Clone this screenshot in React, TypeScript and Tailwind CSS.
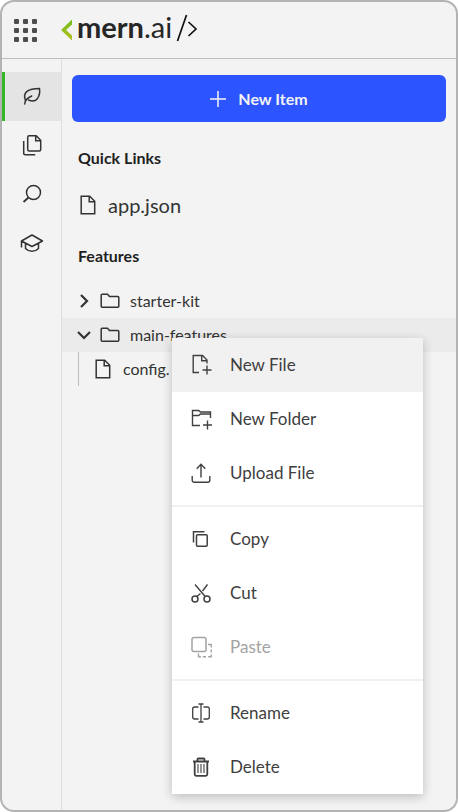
import { useState, type ReactNode } from "react";
import clsx from "clsx";

type IconProps = { className?: string; children: ReactNode };

function Icon({ className, children }: IconProps) {
  return (
    <svg
      viewBox="0 0 24 24"
      fill="none"
      stroke="currentColor"
      strokeWidth="1.5"
      className={clsx("h-6 w-6 shrink-0", className)}
      aria-hidden="true"
    >
      {children}
    </svg>
  );
}

const LeafIcon = () => (
  <Icon>
    <path d="M4.700 20c0-3 1.500-5.700 7-8M5.300 16C2.500 8 8 4.700 19.500 4.500C20.500 11 17.500 19.700 8.500 16" strokeLinecap="round" strokeLinejoin="round" />
  </Icon>
);

const FilesIcon = () => (
  <Icon>
    <path d="M9.200 2.700h7l4.500 4.500v9.300a1.500 1.500 0 0 1-1.500 1.500H9.200a1.500 1.500 0 0 1-1.500-1.500V4.200a1.500 1.500 0 0 1 1.500-1.500ZM15.700 3v4.700h4.700M3.700 8v12.200a1.500 1.500 0 0 0 1.500 1.500h10" />
  </Icon>
);

const SearchIcon = () => (
  <Icon>
    <circle cx="13.500" cy="10.500" r="7" />
    <path d="M8.500 15.500 3.500 20" strokeWidth="1.800" />
  </Icon>
);

const CapIcon = () => (
  <Icon>
    <path d="M12 4 1.500 10 12 15.500 22.500 10 12 4ZM1.500 10v6.500M5.500 12.500v5c3.500 3.700 9.500 3.700 13 0v-5" strokeLinejoin="round" />
  </Icon>
);

const FileIcon = () => (
  <Icon>
    <path d="M5.200 3.200h8.500l5 5v12.600H5.200V3.200ZM13.200 3.200v5.500h5.500" />
  </Icon>
);

const FolderIcon = () => (
  <Icon>
    <path d="M3.200 6.200a1 1 0 0 1 1-1h5.300l2 2.200h8.300a1 1 0 0 1 1 1v8.800a1 1 0 0 1-1 1H4.200a1 1 0 0 1-1-1Z" />
  </Icon>
);

const NewFileIcon = () => (
  <Icon>
    <path d="M10 19.500H4.200v-17h9.300l4.500 4.500v3.500M12.700 2.700v5H18M18 12.500v9M13.500 17h9" strokeWidth="1.400" />
  </Icon>
);

const NewFolderIcon = () => (
  <Icon>
    <path d="M11 18.500H3.500V3.500h6.200l1.800 1.500h10v6M3.500 8.500h6.200l1.800-1.500h10M18.500 13.500v9M14 18h9" strokeWidth="1.400" />
  </Icon>
);

const UploadIcon = () => (
  <Icon>
    <path d="M12 16.500V3.500M7.700 7.700 12 3.300l4.300 4.400M3.200 15v4.300a2 2 0 0 0 2 2h13.600a2 2 0 0 0 2-2V15" strokeWidth="1.400" />
  </Icon>
);

const CopyIcon = () => (
  <Icon>
    <path d="M8.500 7.700h8.700a1 1 0 0 1 1 1v9.500a1 1 0 0 1-1 1H8.500a1 1 0 0 1-1-1V8.700a1 1 0 0 1 1-1ZM4.500 15.500V4.700h11" />
  </Icon>
);

const CutIcon = () => (
  <Icon>
    <circle cx="6" cy="18" r="3" />
    <circle cx="18" cy="18" r="3" />
    <path d="M6 3.500 16.200 15.500M18.500 3.500l-5 6.500M11.500 12.500 7.800 15.500" strokeWidth="1.400" />
  </Icon>
);

const PasteIcon = () => (
  <Icon>
    <rect x="3" y="2.500" width="14" height="14" rx="2" />
    <path d="M19 9.500h3.200v3M22.200 14.500v3M22.200 19.500v2.200h-3M17 21.700h-3.200M12 21.700H9.500v-3.200" strokeWidth="1.400" />
  </Icon>
);

const RenameIcon = () => (
  <Icon>
    <path d="M12 3.500v17M9.500 3h5M9.500 21h5M9.500 6H5.700a2 2 0 0 0-2 2v8a2 2 0 0 0 2 2h3.800M14.500 6h3.800a2 2 0 0 1 2 2v8a2 2 0 0 1-2 2h-3.800" strokeWidth="1.300" />
  </Icon>
);

const TrashIcon = () => (
  <Icon>
    <path d="M4 6.500h16M8.500 6V4.300a.8.8 0 0 1 .8-.8h5.400a.8.8 0 0 1 .8.800V6M5.700 6.500v12.800a1.500 1.500 0 0 0 1.500 1.500h9.600a1.500 1.500 0 0 0 1.500-1.500V6.500" strokeWidth="1.800" />
    <path d="M9 9v9M12 9v9M15 9v9" strokeWidth="1.100" />
  </Icon>
);

function Chevron({ open }: { open?: boolean }) {
  return (
    <svg
      viewBox="0 0 16 16"
      className="-mr-0.5 h-4 w-4 shrink-0"
      fill="none"
      stroke="currentColor"
      strokeWidth="2.200"
      aria-hidden="true"
    >
      <path d={open ? "m2 5 6 6 6-6" : "m5 2 6 6-6 6"} />
    </svg>
  );
}

const navItems = [
  { label: "Explore", icon: <LeafIcon /> },
  { label: "Files", icon: <FilesIcon /> },
  { label: "Search", icon: <SearchIcon /> },
  { label: "Learn", icon: <CapIcon /> },
];

const menuGroups = [
  [
    { label: "New File", icon: <NewFileIcon /> },
    { label: "New Folder", icon: <NewFolderIcon /> },
    { label: "Upload File", icon: <UploadIcon /> },
  ],
  [
    { label: "Copy", icon: <CopyIcon /> },
    { label: "Cut", icon: <CutIcon /> },
    { label: "Paste", icon: <PasteIcon />, disabled: true },
  ],
  [
    { label: "Rename", icon: <RenameIcon /> },
    { label: "Delete", icon: <TrashIcon /> },
  ],
];

function Logo() {
  return (
    <a href="#" aria-label="mern.ai" className="flex items-center text-[#262626]">
      <svg viewBox="0 0 12 22" className="h-[22px] w-3" aria-hidden="true">
        <defs>
          <linearGradient id="bracket" x1="0" y1="0" x2="0" y2="1">
            <stop offset="0" stopColor="#6fbe1c" />
            <stop offset="1" stopColor="#b5bf22" />
          </linearGradient>
        </defs>
        <path d="M11 .5v5L5 11l6 5.500v5L0 11Z" fill="url(#bracket)" />
      </svg>
      <span className="ml-1 pb-1.5 text-[29px] leading-8">
        <span className="font-bold">mern</span>
        <span>.ai</span>
      </span>
      <svg viewBox="0 0 22 28" className="mb-1 ml-1 h-7 w-[22px]" fill="none" stroke="#111" strokeWidth="1.700" aria-hidden="true">
        <path d="M1.500 27 10.500 1M12.500 8l7.500 7-7.500 7" />
      </svg>
    </a>
  );
}

function ContextMenu() {
  return (
    <div
      role="menu"
      className="absolute top-5 left-[110px] z-10 w-[251px] bg-white text-[#404040] shadow-[0_3px_10px_rgba(0,0,0,0.22)]"
    >
      {menuGroups.map((group, groupIndex) => (
        <div key={groupIndex}>
          {groupIndex > 0 && <div role="separator" className="my-[5px] h-0.5 bg-[#f0f0f0]" />}
          {group.map((item, index) => (
            <button
              key={item.label}
              type="button"
              role="menuitem"
              disabled={"disabled" in item}
              className={clsx(
                "flex h-[54px] w-full items-center gap-[17px] px-[17px] text-left text-[17px] disabled:text-[#a3a3a3]",
                groupIndex === 0 && index === 0 && "bg-[#f1f1f1]",
              )}
            >
              {item.icon}
              {item.label}
            </button>
          ))}
        </div>
      ))}
    </div>
  );
}

export default function App() {
  const [activeNav, setActiveNav] = useState("Explore");

  return (
    <div className="flex min-h-screen flex-col overflow-hidden rounded-[14px] border-2 border-[#b3b3b3] bg-[#f3f3f3] font-['Lato',sans-serif] text-[#333]">
      <header className="flex h-[57px] items-center gap-6 border-b border-[#bdbdbd] px-3">
        <button type="button" aria-label="Apps" className="grid grid-cols-3 gap-1">
          {Array.from({ length: 9 }, (_, dot) => (
            <span key={dot} className="h-[5px] w-[5px] rounded-[1px] bg-[#4d4d4d]" />
          ))}
        </button>
        <Logo />
      </header>

      <div className="flex flex-1">
        <nav className="w-[60px] shrink-0 border-r border-[#dedede] pt-[13px]">
          {navItems.map((item) => (
            <button
              key={item.label}
              type="button"
              aria-label={item.label}
              onClick={() => setActiveNav(item.label)}
              className={clsx(
                "flex h-[49px] w-full items-center justify-center border-l-[3px] pr-0.5 pb-0.5",
                activeNav === item.label ? "border-[#35b729] bg-[#e4e4e4]" : "border-transparent",
              )}
            >
              {item.icon}
            </button>
          ))}
        </nav>

        <main className="min-w-0 flex-1 pt-4">
          <div className="px-[10px]">
            <button
              type="button"
              className="flex h-[47px] w-full items-center justify-center gap-3 rounded-md bg-[#2d55ff] text-base font-bold text-[#f3f3f3]"
            >
              <svg viewBox="0 0 16 16" className="h-4 w-4" stroke="currentColor" strokeWidth="1.500" aria-hidden="true">
                <path d="M8 0v16M0 8h16" />
              </svg>
              New Item
            </button>
          </div>

          <section className="px-4 pt-6">
            <h2 className="text-base font-bold text-[#1f1f1f]">Quick Links</h2>
            <a href="#" className="mt-[18px] flex h-[34px] items-center gap-2 text-xl">
              <span className="-ml-0.5">
                <FileIcon />
              </span>
              app.json
            </a>
          </section>

          <section className="pt-[22px]">
            <h2 className="px-4 text-base font-bold text-[#1f1f1f]">Features</h2>
            <ul className="mt-4 text-base">
              <li>
                <button type="button" className="flex h-[34px] w-full items-center gap-2 px-[14px]">
                  <Chevron />
                  <FolderIcon />
                  starter-kit
                </button>
              </li>
              <li className="relative">
                <button type="button" aria-expanded="true" className="flex h-[34px] w-full items-center gap-2 bg-[#ebebeb] px-[14px]">
                  <Chevron open />
                  <FolderIcon />
                  main-features
                </button>
                <ul className="ml-4 border-l border-[#bdbdbd]">
                  <li className="flex h-[34px] items-center gap-2 pl-3">
                    <FileIcon />
                    config.
                  </li>
                </ul>
                <ContextMenu />
              </li>
            </ul>
          </section>
        </main>
      </div>
    </div>
  );
}
